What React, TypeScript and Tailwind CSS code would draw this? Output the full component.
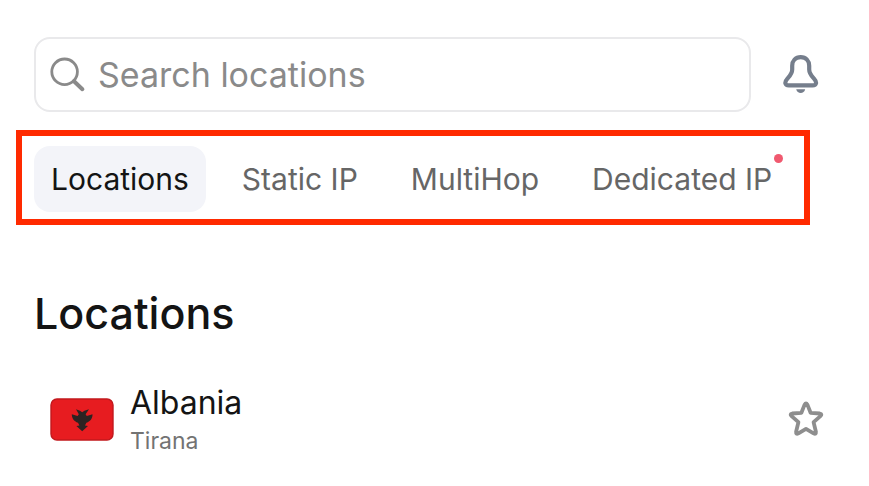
import React from 'react';
import clsx from 'clsx';

const tabs = [
  { name: 'Locations', active: true },
  { name: 'Static IP' },
  { name: 'MultiHop' },
  { name: 'Dedicated IP', isNew: true },
];

const SearchIcon = () => (
  <svg className="w-9 h-9 shrink-0" viewBox="0 0 36 36" fill="none" stroke="#8a8a8a" aria-hidden="true">
    <circle cx="14.6" cy="14.8" r="12.8" strokeWidth="2.8" />
    <path d="M24 24.2 32.4 32.2" strokeWidth="4" strokeLinecap="round" />
  </svg>
);

const BellIcon = () => (
  <svg className="w-9 h-10" viewBox="0 0 36 40" fill="none" aria-hidden="true">
    <path
      d="M17.7 2.2C12.4 2.2 9.2 6 9.2 10.8V14.5C9.2 18.6 7.4 20.4 4.6 23.4C2.6 25.6 2.1 27 2.4 28.4C2.7 29.8 4 30.4 5.8 30.4H29.6C31.4 30.4 32.7 29.8 33 28.4C33.3 27 32.8 25.6 30.8 23.4C28 20.4 26.2 18.6 26.2 14.5V10.8C26.2 6 23 2.2 17.7 2.2Z"
      stroke="#757e8c"
      strokeWidth="4.2"
      strokeLinejoin="round"
    />
    <path d="M13.2 34.2H22.2C21.6 36.8 19.8 38 17.7 38C15.6 38 13.8 36.8 13.2 34.2Z" fill="#757e8c" />
  </svg>
);

const StarIcon = () => (
  <svg className="w-9 h-9" viewBox="0 0 36 36" fill="none" aria-hidden="true">
    <path
      d="M16.6 3.6Q18 1.2 19.4 3.6L22.6 11.8 31.8 12.5Q34.6 13 32.4 15.2L25.6 21.2 27.9 30.8Q28.2 33.8 25.6 32.4L18 27.8 10.4 32.4Q7.8 33.8 8.1 30.8L10.4 21.2 3.6 15.2Q1.4 13 4.2 12.5L13.4 11.8Z"
      stroke="#8e8e8e"
      strokeWidth="3.8"
      strokeLinejoin="round"
    />
  </svg>
);

const AlbaniaFlag = () => (
  <svg className="w-16 h-[43px] shrink-0" viewBox="0 0 64 43" role="img" aria-label="Flag of Albania">
    <rect x="1" y="1" width="62" height="41" rx="6" fill="#e71c20" stroke="#c2181d" strokeWidth="1.4" />
    <path
      d="M26 11.3 30 12.8 32.2 14.2 34.4 12.8 39 11.3 35.6 16.2 36.8 18 42.5 16.2C42.6 20 40.6 23.2 36.4 24.8L35 27.4 38 28 32.2 33.2 26.4 28 29.4 27.4 28 24.8C23.8 23.2 21.8 20 21.8 16.2L27.6 18 28.8 16.2Z"
      fill="#2d2322"
    />
  </svg>
);

const App = () => {
  return (
    <main className="bg-white pt-[37px] pb-8 font-['Inter','Liberation_Sans',sans-serif] text-[#141414]">
      <div className="flex items-center gap-8 pl-[34px] pr-[50px]">
        <label className="flex flex-1 min-w-0 items-center gap-3 h-[75px] px-3.5 border-2 border-[#e9e9eb] rounded-2xl">
          <SearchIcon />
          <input
            type="text"
            aria-label="Search locations"
            placeholder="Search locations"
            className="flex-1 min-w-0 bg-transparent text-[34px] leading-10 outline-none placeholder:text-[#8a8a8a]"
          />
        </label>
        <button type="button" aria-label="Notifications">
          <BellIcon />
        </button>
      </div>

      <nav className="flex gap-[19px] mt-[18px] ml-4 mr-[59px] border-6 border-[#ff2a00] px-3 pt-2.5 pb-[7px]">
        {tabs.map((tab) => (
          <button
            key={tab.name}
            type="button"
            className={clsx(
              'relative px-[17px] py-[13px] rounded-2xl text-[30px] leading-10 whitespace-nowrap',
              tab.active ? 'bg-[#f3f4f9] text-[#141414]' : 'text-[#666666]'
            )}
          >
            {tab.name}
            {tab.isNew && (
              <span className="absolute top-2 right-1.5 w-[9px] h-[9px] rounded-full bg-[#f0596f]" />
            )}
          </button>
        ))}
      </nav>

      <section className="mt-[60px] pl-[34px] pr-[45px]">
        <h1 className="text-[43px] leading-14 font-medium">Locations</h1>
        <ul className="mt-10">
          <li className="flex items-center pl-4">
            <AlbaniaFlag />
            <div className="flex-1 ml-4">
              <h2 className="text-[32px] leading-11">Albania</h2>
              <p className="text-[23px] leading-8 text-[#737373]">Tirana</p>
            </div>
            <button type="button" aria-label="Add Albania to favorites">
              <StarIcon />
            </button>
          </li>
        </ul>
      </section>
    </main>
  );
};

export default App;
